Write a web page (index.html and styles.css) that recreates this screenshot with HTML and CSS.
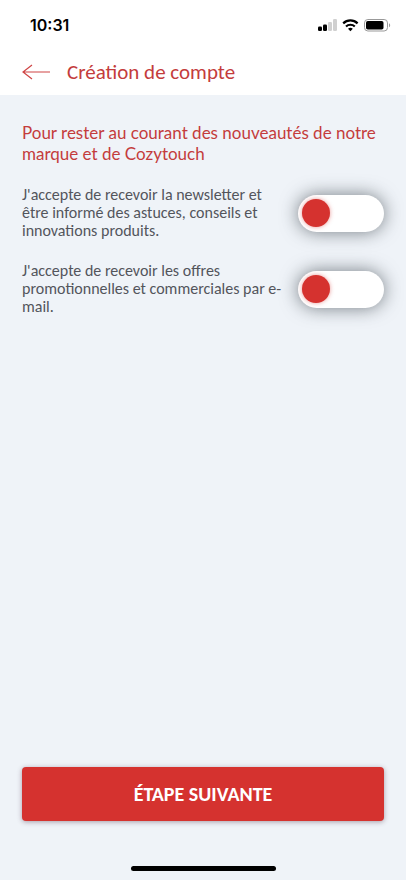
FILE: index.html
```html
<!DOCTYPE html>
<html lang="fr">
<head>
<meta charset="utf-8">
<meta name="viewport" content="width=device-width, initial-scale=1">
<title>Création de compte</title>
<link rel="stylesheet" href="styles.css">
</head>
<body>
<div class="status">
  <span class="time">10:31</span>
  <svg class="status-icons" width="74" height="14" viewBox="0 0 74 14" aria-hidden="true">
    <rect x="0" y="8.500" width="4" height="4.500" rx="1.3"/>
    <rect x="5" y="6.500" width="4" height="6.500" rx="1.3"/>
    <rect x="10" y="4" width="4" height="9" rx="1.3" fill="#d0d0d0"/>
    <rect x="15" y="1" width="4" height="12" rx="1.3" fill="#d0d0d0"/>
    <g fill="none" stroke="#000" stroke-width="2.2">
      <path d="M25.2 5.400a10.300 10.300 0 0 1 14.400 0"/>
      <path d="M28 8.500a6.400 6.400 0 0 1 8.800 0"/>
    </g>
    <path d="M30 10.800a3.600 3.600 0 0 1 4.800 0l-2.400 2.400z"/>
    <rect x="46.500" y="1.500" width="23" height="11.500" rx="3.400" fill="none" stroke="#999"/>
    <rect x="48" y="3" width="17.500" height="8.500" rx="1.800"/>
    <path d="M71 5.200v4c1.600-.6 1.600-3.400 0-4z" fill="#999"/>
  </svg>
</div>
<header class="header">
  <button class="back" type="button" aria-label="Retour">
    <svg width="28" height="16" viewBox="0 0 28 16" aria-hidden="true"><path d="M28 8H1M10 1L1 8l9 7" fill="none" stroke="#cf4545" stroke-width="1.200"/></svg>
  </button>
  <h1 class="title">Création de compte</h1>
</header>
<main class="content">
  <h2 class="intro">Pour rester au courant des nouveautés de notre marque et de Cozytouch</h2>
  <div class="option">
    <label class="option-text" for="news">J'accepte de recevoir la newsletter et être informé des astuces, conseils et innovations produits.</label>
    <input class="switch" type="checkbox" role="switch" id="news">
  </div>
  <div class="option">
    <label class="option-text" for="offers">J'accepte de recevoir les offres promotionnelles et commerciales par e-mail.</label>
    <input class="switch" type="checkbox" role="switch" id="offers">
  </div>
  <button class="next" type="button">ÉTAPE SUIVANTE</button>
</main>
<div class="home"></div>
</body>
</html>
```
FILE: styles.css
```css
* { box-sizing: border-box; }
body {
  margin: 0;
  min-height: 100vh;
  display: flex;
  flex-direction: column;
  background: #eff3f8;
  color: #53555c;
  font-family: Carlito, Lato, sans-serif;
}
.status {
  display: flex;
  align-items: center;
  justify-content: space-between;
  height: 50px;
  padding: 0 14px 0 30px;
  background: #fff;
}
.time {
  color: #000;
  font: 600 16px/20px Inter, sans-serif;
}
.header {
  display: flex;
  align-items: center;
  gap: 17px;
  height: 45px;
  padding: 0 22px 2px;
  background: #fff;
}
.back {
  display: flex;
  padding: 0;
  border: 0;
  background: none;
}
.title, .intro {
  margin: 0;
  color: #c43c3c;
  font-weight: 400;
}
.title { font-size: 21px; line-height: 24px; }
.content {
  flex: 1;
  display: flex;
  flex-direction: column;
  padding: 27px 22px 0;
}
.intro {
  margin-bottom: 22px;
  font-family: Lato, sans-serif;
  font-size: 17px;
  line-height: 21px;
}
.option {
  display: flex;
  align-items: center;
  justify-content: space-between;
  gap: 8px;
  margin-bottom: 22px;
}
.option-text {
  flex: 1;
  font-size: 16px;
  line-height: 18px;
}
.switch {
  appearance: none;
  flex: none;
  width: 86px;
  height: 37px;
  margin: 0;
  padding: 4px;
  border-radius: 19px;
  background: #fff;
  box-shadow: 0 0 18px rgba(50, 60, 68, .65);
}
.switch::before {
  content: "";
  display: block;
  width: 28px;
  height: 28px;
  border-radius: 50%;
  background: #d5322f;
  box-shadow: 0 0 4px rgba(213, 50, 47, .5);
}
.switch:checked::before { margin-left: auto; }
.next {
  height: 54px;
  margin-top: auto;
  border: 0;
  border-radius: 4px;
  background: #d5322f;
  color: #fff;
  font: 700 20px/22px Carlito, Lato, sans-serif;
  box-shadow: 0 1px 5px rgba(80, 50, 70, .45);
}
.home {
  width: 145px;
  height: 5px;
  margin: 45px auto 9px;
  border-radius: 3px;
  background: #000;
}
```
